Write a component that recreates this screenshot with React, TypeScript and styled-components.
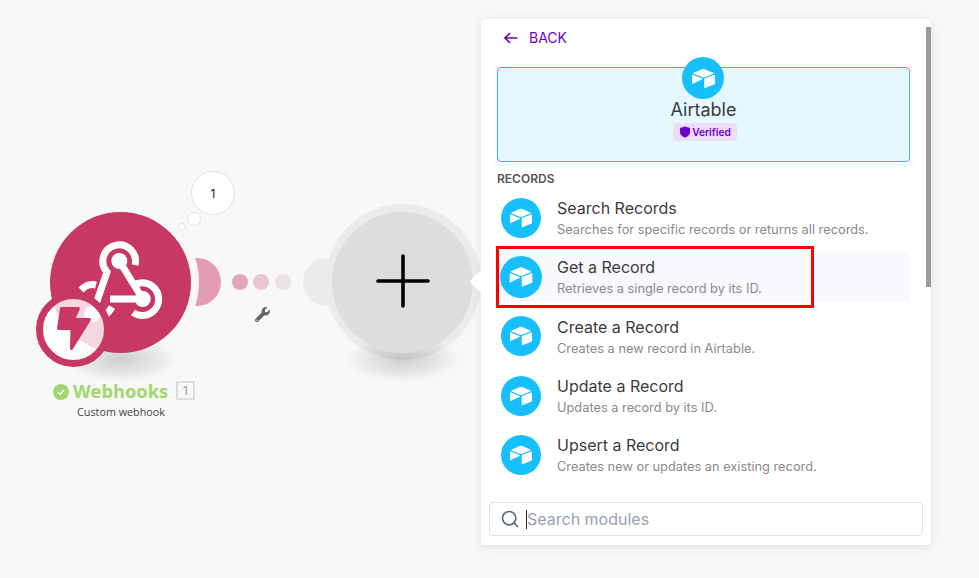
import React from "react";
import styled, { createGlobalStyle } from "styled-components";
import { SiAirtable } from "react-icons/si";
import { FaWrench } from "react-icons/fa";
import { FiSearch } from "react-icons/fi";

const GlobalStyle = createGlobalStyle`
  html, body {
    margin: 0;
    padding: 0;
    background: #f8f8f8;
    font-family: Inter, "Liberation Sans", sans-serif;
  }
`;

const Canvas = styled.div`
  position: relative;
  width: 979px;
  height: 578px;
  overflow: hidden;
  background: #f8f8f8;
`;

/* ---------- scenario canvas ---------- */

const NodeSpot = styled.div<{ $x: number; $y: number }>`
  position: absolute;
  left: ${(p) => p.$x}px;
  top: ${(p) => p.$y}px;
  width: 141px;
  height: 141px;
`;

const FloorShadow = styled.div`
  position: absolute;
  left: 15px;
  top: 124px;
  width: 112px;
  height: 46px;
  background: radial-gradient(ellipse at center, rgba(0, 0, 0, 0.17) 0%, rgba(0, 0, 0, 0.06) 50%, rgba(0, 0, 0, 0) 72%);
`;

const Handle = styled.div<{ $left: number; $color: string }>`
  position: absolute;
  left: ${(p) => p.$left}px;
  top: 46px;
  width: 48px;
  height: 48px;
  border-radius: 50%;
  background: ${(p) => p.$color};
`;

const Ring = styled.div<{ $color: string }>`
  position: absolute;
  left: -7.5px;
  top: -8.5px;
  width: 156px;
  height: 156px;
  border-radius: 50%;
  background: ${(p) => p.$color};
`;

const Disc = styled.div<{ $color: string }>`
  position: absolute;
  inset: 0;
  border-radius: 50%;
  background: ${(p) => p.$color};
  display: flex;
  align-items: center;
  justify-content: center;
`;

const GlyphSvg = styled.svg`
  position: absolute;
  inset: 0;
`;

const PlusSvg = styled.svg`
  margin-top: -3px;
`;

const TriggerBadge = styled.div`
  position: absolute;
  left: -14px;
  top: 80px;
  width: 75px;
  height: 75px;
  box-sizing: border-box;
  border: 7px solid #c73963;
  border-radius: 50%;
  background: rgba(255, 255, 255, 0.8);
  display: flex;
  align-items: center;
  justify-content: center;
`;

const Bubble = styled.div<{ $x: number; $y: number; $size: number }>`
  position: absolute;
  left: ${(p) => p.$x}px;
  top: ${(p) => p.$y}px;
  width: ${(p) => p.$size}px;
  height: ${(p) => p.$size}px;
  box-sizing: border-box;
  border: 1px solid #e2e2e2;
  border-radius: 50%;
  background: #fff;
  display: flex;
  align-items: center;
  justify-content: center;
  font-size: 12px;
  color: #222;
`;

const Dot = styled.div<{ $x: number; $color: string }>`
  position: absolute;
  left: ${(p) => p.$x}px;
  top: 274px;
  width: 16px;
  height: 16px;
  border-radius: 50%;
  background: ${(p) => p.$color};
`;

const WrenchSpot = styled.div`
  position: absolute;
  left: 255px;
  top: 307px;
  display: flex;
  color: #666;
`;

const NodeLabel = styled.div`
  position: absolute;
  left: 21px;
  top: 378px;
  width: 200px;
  display: flex;
  flex-direction: column;
  align-items: center;
`;

const NameLine = styled.div`
  display: flex;
  align-items: center;
  height: 24px;
  margin-left: 6px;
`;

const CheckMark = styled.div`
  width: 16px;
  height: 16px;
  border-radius: 50%;
  background: #a2d66e;
  display: flex;
  align-items: center;
  justify-content: center;
  margin-right: 4px;
  margin-top: 3px;
`;

const NodeName = styled.span`
  font-family: "Open Sans", sans-serif;
  font-size: 18.3px;
  font-weight: 700;
  color: #a2d66e;
`;

const CountBox = styled.span`
  box-sizing: border-box;
  width: 19px;
  height: 19px;
  margin-left: 8px;
  border: 2px solid #ddd;
  font-size: 12px;
  color: #999;
  display: flex;
  align-items: center;
  justify-content: center;
`;

const NodeSub = styled.div`
  margin-top: 2px;
  font-family: "Open Sans", sans-serif;
  font-size: 10.8px;
  color: #444;
`;

/* ---------- module picker ---------- */

const Panel = styled.div`
  position: absolute;
  left: 481px;
  top: 19px;
  width: 450px;
  height: 526px;
  box-sizing: border-box;
  padding: 0 21px 9px 16px;
  display: flex;
  flex-direction: column;
  background: #fff;
  border-radius: 4px;
  box-shadow: 0 2px 10px rgba(0, 0, 0, 0.1);

  &::before {
    content: "";
    position: absolute;
    left: -8px;
    top: 254px;
    width: 17px;
    height: 17px;
    background: #fff;
    transform: rotate(45deg);
  }
`;

const Scrollbar = styled.div`
  position: absolute;
  right: 0;
  top: 8px;
  width: 5px;
  height: 260px;
  background: #9c9c9c;
`;

const BackRow = styled.div`
  height: 37px;
  display: flex;
  align-items: center;
  gap: 11px;
  padding-left: 6px;
  font-size: 14px;
  color: #6d00cc;
`;

const Banner = styled.div`
  box-sizing: border-box;
  margin-top: 11px;
  height: 95px;
  display: flex;
  flex-direction: column;
  align-items: center;
  background: #e5f7ff;
  border: 1px solid #2fb8ef;
  border-radius: 4px;
`;

const AppIcon = styled.div<{ $size: number; $active?: boolean }>`
  flex: none;
  width: ${(p) => p.$size}px;
  height: ${(p) => p.$size}px;
  border-radius: 50%;
  background: #18bfff;
  color: #fff;
  display: flex;
  align-items: center;
  justify-content: center;
  transform: ${(p) => (p.$active ? "scale(1.05)" : "none")};
`;

const BannerIcon = styled(AppIcon)`
  margin: -11px 1px 0 0;
`;

const BannerTitle = styled.div`
  font-size: 18px;
  line-height: 22px;
  color: #3c3c3c;
`;

const VerifiedTag = styled.div`
  margin: 2px 0 0 3px;
  height: 18px;
  padding: 0 6px;
  display: flex;
  align-items: center;
  gap: 1px;
  border-radius: 4px;
  background: #eddcf6;
  color: #6d00cc;
  font-size: 10.2px;
  font-weight: 600;
`;

const GroupLabel = styled.div`
  margin-top: 9px;
  height: 16px;
  line-height: 16px;
  font-size: 12px;
  font-weight: 600;
  color: #555;
`;

const ModuleList = styled.div`
  position: relative;
  margin-top: 6px;
  display: flex;
  flex-direction: column;
  gap: 10px;
`;

const ModuleRow = styled.div<{ $active?: boolean }>`
  height: 49.3px;
  box-sizing: border-box;
  display: flex;
  align-items: center;
  gap: 16px;
  padding-left: 4px;
  border-radius: 4px;
  background: ${(p) => (p.$active ? "#f8f8fd" : "transparent")};
`;

const ModuleText = styled.div`
  display: flex;
  flex-direction: column;
  margin-top: 3px;
`;

const ModuleName = styled.div`
  font-size: 16px;
  line-height: 21px;
  color: #3c3c3c;
`;

const ModuleDesc = styled.div`
  font-size: 12.8px;
  line-height: 21px;
  color: #8a8a8a;
`;

const Highlight = styled.div`
  position: absolute;
  left: -1px;
  top: 53px;
  width: 318px;
  height: 62px;
  box-sizing: border-box;
  border: 3px solid #f00;
  pointer-events: none;
`;

const SearchBox = styled.div`
  margin: auto -13px 0 -8px;
  height: 34px;
  box-sizing: border-box;
  display: flex;
  align-items: center;
  padding-left: 10px;
  border: 1px solid #e2e2e2;
  border-radius: 4px;
  color: #5b6b7a;
`;

const Caret = styled.span`
  width: 1px;
  height: 19px;
  margin-left: 6px;
  background: #222;
`;

const SearchInput = styled.input`
  flex: 1;
  min-width: 0;
  border: 0;
  outline: 0;
  padding: 0;
  background: transparent;
  font-family: inherit;
  font-size: 16px;
  &::placeholder {
    color: #98a1b3;
    opacity: 1;
  }
`;

const modules = [
  { name: "Search Records", desc: "Searches for specific records or returns all records." },
  { name: "Get a Record", desc: "Retrieves a single record by its ID.", active: true },
  { name: "Create a Record", desc: "Creates a new record in Airtable." },
  { name: "Update a Record", desc: "Updates a record by its ID." },
  { name: "Upsert a Record", desc: "Creates new or updates an existing record." },
];

const WebhookGlyph = () => (
  <GlyphSvg width="141" height="141" viewBox="0 0 141 141" fill="none">
    <g stroke="#fff" strokeWidth="7">
      <path d="M85 53 A16.3 16.3 0 1 0 57 60 L44 98" />
      <path d="M83.5 73.5 A16.3 16.3 0 1 1 83 100.5" />
      <path d="M69.3 49 L92.7 87" />
      <path d="M92.7 87 L60 87" />
      <path d="M31 78 Q38 71 46 73" />
      <path d="M53 105 Q58 102 62 95" />
    </g>
    <circle cx="69.3" cy="49" r="8" fill="#fff" />
    <circle cx="92.7" cy="87" r="8" fill="#fff" />
    <circle cx="42" cy="102" r="8" fill="#fff" />
  </GlyphSvg>
);

const App: React.FunctionComponent = () => {
  return (
    <Canvas>
      <GlobalStyle />

      <NodeSpot $x={50} $y={212}>
        <Handle $left={123} $color="#e39cb3" />
        <Ring $color="#f8f8f8" />
        <FloorShadow />
        <Disc $color="#c73963">
          <WebhookGlyph />
        </Disc>
        <TriggerBadge>
          <svg width="61" height="61" viewBox="0 0 61 61">
            <path
              d="M18.5 9.5 H35.5 L30.5 20.5 H46.5 L28.5 49.5 L29 29.5 H15.5 Z"
              fill="#c73963"
              stroke="#c73963"
              strokeWidth="3"
              strokeLinejoin="round"
            />
          </svg>
        </TriggerBadge>
      </NodeSpot>

      <Bubble $x={178} $y={223} $size={8} />
      <Bubble $x={187} $y={212} $size={14} />
      <Bubble $x={191} $y={171} $size={44}>1</Bubble>

      <Dot $x={232} $color="#e3a5bb" />
      <Dot $x={253} $color="#eac6d3" />
      <Dot $x={275} $color="#ebe2e6" />
      <WrenchSpot>
        <FaWrench size={15} />
      </WrenchSpot>

      <NodeLabel>
        <NameLine>
          <CheckMark>
            <svg width="10" height="10" viewBox="0 0 10 10" fill="none">
              <path d="M2 5.2 L4.2 7.2 L8 3" stroke="#fff" strokeWidth="1.4" />
            </svg>
          </CheckMark>
          <NodeName>Webhooks</NodeName>
          <CountBox>1</CountBox>
        </NameLine>
        <NodeSub>Custom webhook</NodeSub>
      </NodeLabel>

      <NodeSpot $x={332} $y={212}>
        <Handle $left={-29} $color="#ebebeb" />
        <Ring $color="#ebebeb" />
        <FloorShadow />
        <Disc $color="#dddddd">
          <PlusSvg width="54" height="54" viewBox="0 0 54 54">
            <path d="M2 27 H52 M27 2 V52" stroke="#000" strokeWidth="3.6" strokeLinecap="round" />
          </PlusSvg>
        </Disc>
      </NodeSpot>

      <Panel>
        <Scrollbar />
        <BackRow>
          <svg width="15" height="14" viewBox="0 0 15 14" fill="none" stroke="#6d00cc" strokeWidth="1.7">
            <path d="M14.5 7 H2 M7 2 L2 7 L7 12" />
          </svg>
          BACK
        </BackRow>
        <Banner>
          <BannerIcon $size={42}>
            <SiAirtable size={23} />
          </BannerIcon>
          <BannerTitle>Airtable</BannerTitle>
          <VerifiedTag>
            <svg width="12" height="12" viewBox="0 0 12 12">
              <path d="M6 .5 L11 2 V6 C11 9 8.5 10.8 6 11.6 C3.5 10.8 1 9 1 6 V2 Z" fill="#6d00cc" />
            </svg>
            Verified
          </VerifiedTag>
        </Banner>
        <GroupLabel>RECORDS</GroupLabel>
        <ModuleList>
          {modules.map((m) => (
            <ModuleRow key={m.name} $active={m.active}>
              <AppIcon $size={40} $active={m.active}>
                <SiAirtable size={22} />
              </AppIcon>
              <ModuleText>
                <ModuleName>{m.name}</ModuleName>
                <ModuleDesc>{m.desc}</ModuleDesc>
              </ModuleText>
            </ModuleRow>
          ))}
          <Highlight />
        </ModuleList>
        <SearchBox>
          <FiSearch size={20} />
          <Caret />
          <SearchInput placeholder="Search modules" readOnly />
        </SearchBox>
      </Panel>
    </Canvas>
  );
};

export default App;
